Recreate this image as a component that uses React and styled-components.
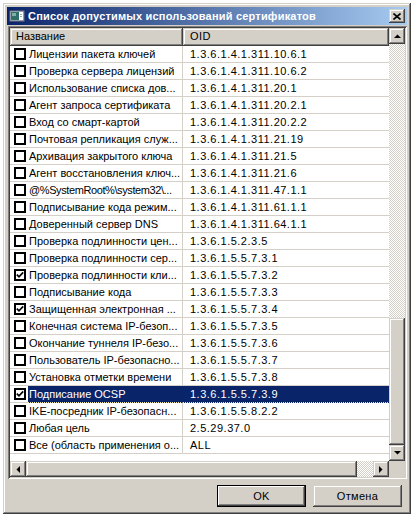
import React from "react";
import styled, { createGlobalStyle } from "styled-components";

const Global = createGlobalStyle`
  html, body { margin: 0; padding: 0; background: #ffffff; }
  body { font-family: "Liberation Sans", Arial, sans-serif; font-size: 11px; }
  #root { padding: 3px 0 0 3px; }
`;

const raised = `
  box-shadow: inset -1px -1px #404040, inset 1px 1px #d4d0c8,
    inset -2px -2px #808080, inset 2px 2px #ffffff;
`;

const Dialog = styled.div`
  box-sizing: border-box;
  width: 408px;
  height: 511px;
  padding: 4px;
  background: #d4d0c8;
  ${raised}
  display: flex;
  flex-direction: column;
`;

const TitleBar = styled.div`
  height: 18px;
  flex: none;
  display: flex;
  align-items: center;
  padding-left: 2px;
  background: linear-gradient(to right, #0a246a, #a6caf0);
`;

const TitleText = styled.span`
  flex: 1;
  margin-left: 3px;
  color: #ffffff;
  font-weight: bold;
  font-size: 11px;
  white-space: nowrap;
  letter-spacing: 0.2px;
`;

const CloseButton = styled.div`
  width: 16px;
  height: 14px;
  margin-right: 2px;
  background: #d4d0c8;
  ${raised}
  display: flex;
  align-items: center;
  justify-content: center;
`;

const ListView = styled.div`
  box-sizing: border-box;
  height: 453px;
  margin: 1px 0 0 1px;
  padding: 2px;
  background: #ffffff;
  box-shadow: inset 1px 1px #808080, inset -1px -1px #ffffff,
    inset 2px 2px #404040, inset -2px -2px #d4d0c8;
  display: grid;
  grid-template-columns: 1fr 16px;
  grid-template-rows: 1fr 16px;
  flex: none;
`;

const Content = styled.div`
  overflow: hidden;
  display: flex;
  flex-direction: column;
  min-width: 0;
`;

const HeaderRow = styled.div`
  display: grid;
  grid-template-columns: 173px 1fr;
  height: 18px;
  flex: none;
`;

const HeaderCell = styled.div`
  background: #d4d0c8;
  ${raised}
  padding-left: ${(p) => p.$pad}px;
  line-height: 17px;
  font-size: 11px;
  color: #000;
  white-space: nowrap;
  letter-spacing: ${(p) => p.$ls || 0}px;
`;

const Row = styled.div`
  display: grid;
  grid-template-columns: 173px 1fr;
  height: 17px;
  flex: none;
`;

const NameCell = styled.div`
  display: flex;
  align-items: stretch;
  border-right: 1px solid ${(p) => (p.$sel ? "#0a246a" : "#d4d0c8")};
  border-bottom: 1px solid #d4d0c8;
  box-sizing: border-box;
  min-width: 0;
`;

const CheckArea = styled.div`
  width: 18px;
  flex: none;
  display: flex;
  align-items: center;
  padding-left: 4px;
  box-sizing: border-box;
  background: #ffffff;
`;

const Box = styled.div`
  width: 12px;
  height: 12px;
  box-sizing: border-box;
  border: 2px solid #000;
  background: #fff;
  display: flex;
  align-items: center;
  justify-content: center;
`;

const selStripe = `
  background-image: repeating-linear-gradient(to right, #f4e9a8 0 1px, transparent 1px 2px);
  background-size: 100% 1px;
  background-repeat: no-repeat;
  background-position: left bottom;
`;

const Label = styled.div`
  flex: 1;
  min-width: 0;
  padding-left: 1px;
  padding-top: 1px;
  line-height: 15px;
  font-size: 11px;
  white-space: nowrap;
  overflow: hidden;
  letter-spacing: ${(p) => (p.$squeeze ? "-0.4px" : "0")};
  color: ${(p) => (p.$sel ? "#ffffff" : "#000000")};
  background-color: ${(p) => (p.$sel ? "#0a246a" : "transparent")};
  ${(p) => (p.$sel ? selStripe + "margin-bottom: -1px;" : "")}
`;

const OidCell = styled.div`
  padding-left: 7px;
  padding-top: 1px;
  line-height: 15px;
  font-size: 11px;
  letter-spacing: 0.5px;
  white-space: nowrap;
  overflow: hidden;
  box-sizing: border-box;
  border-bottom: 1px solid #d4d0c8;
  color: ${(p) => (p.$sel ? "#ffffff" : "#000000")};
  background-color: ${(p) => (p.$sel ? "#0a246a" : "transparent")};
  ${(p) => (p.$sel ? "border-bottom: none;" + selStripe : "")}
`;

const VScroll = styled.div`
  display: flex;
  flex-direction: column;
`;

const HScroll = styled.div`
  display: flex;
  flex-direction: row;
`;

const ScrollBtn = styled.div`
  width: 16px;
  height: 16px;
  flex: none;
  background: #d4d0c8;
  ${raised}
  display: flex;
  align-items: center;
  justify-content: center;
`;

const Track = styled.div`
  flex: ${(p) => (p.$fixed ? "none" : "1")};
  width: ${(p) => (p.$fixed ? `${p.$fixed}px` : "auto")};
  background-color: #ffffff;
  background-image: conic-gradient(#d4d0c8 25%, #ffffff 0 50%, #d4d0c8 0 75%, #ffffff 0);
  background-size: 2px 2px;
`;

const VThumb = styled.div`
  height: 127px;
  flex: none;
  background: #d4d0c8;
  ${raised}
`;

const HThumb = styled.div`
  flex: 1;
  background: #d4d0c8;
  ${raised}
`;

const Corner = styled.div`
  background: #d4d0c8;
`;

const ButtonRow = styled.div`
  display: flex;
  justify-content: flex-end;
  gap: 7px;
  margin-top: 6px;
  padding-right: 5px;
`;

const Button = styled.div`
  width: 89px;
  height: 22px;
  box-sizing: border-box;
  background: #d4d0c8;
  display: flex;
  align-items: center;
  justify-content: center;
  font-size: 11px;
  letter-spacing: 0.3px;
  color: #000;
  ${(p) =>
    p.$default
      ? `box-shadow: inset 0 0 0 1px #000000, inset -2px -2px #404040, inset 2px 2px #ffffff, inset -3px -3px #808080;`
      : raised}
`;

const Arrow = ({ dir }) => {
  const pts = {
    up: "0,4 7,4 3.5,0.5",
    down: "0,0 7,0 3.5,3.5",
    left: "4,0 4,7 0.5,3.5",
    right: "0,0 0,7 3.5,3.5",
  }[dir];
  const vert = dir === "up" || dir === "down";
  return (
    <svg width={vert ? 7 : 4} height={vert ? 4 : 7} viewBox={vert ? "0 0 7 4" : "0 0 4 7"}>
      <polygon points={pts} fill="#000" />
    </svg>
  );
};

const TitleIcon = () => (
  <svg width="16" height="16" viewBox="0 0 16 16">
    <rect x="1" y="3" width="14" height="10" fill="#c0c0c0" stroke="#6d7b8a" />
    <rect x="2" y="4" width="8" height="8" fill="#2f6f6a" />
    <rect x="3" y="5" width="4" height="3" fill="#7fb0a8" />
    <rect x="10" y="4" width="4" height="8" fill="#ffffff" />
    <rect x="11" y="6" width="2" height="1" fill="#9aa" />
    <rect x="11" y="8" width="2" height="1" fill="#9aa" />
  </svg>
);

const CloseX = () => (
  <svg width="8" height="7" viewBox="0 0 8 7">
    <path d="M0.5 0.5 L7.5 6.5 M7.5 0.5 L0.5 6.5" stroke="#000" strokeWidth="1.6" />
  </svg>
);

const Check = () => (
  <svg width="8" height="8" viewBox="0 0 8 8">
    <polyline points="0.8,3.6 3,5.8 7.2,1.4" fill="none" stroke="#000" strokeWidth="1.7" />
  </svg>
);

const rows = [
  ["Лицензии пакета ключей", "1.3.6.1.4.1.311.10.6.1"],
  ["Проверка сервера лицензий", "1.3.6.1.4.1.311.10.6.2"],
  ["Использование списка дов...", "1.3.6.1.4.1.311.20.1"],
  ["Агент запроса сертификата", "1.3.6.1.4.1.311.20.2.1"],
  ["Вход со смарт-картой", "1.3.6.1.4.1.311.20.2.2"],
  ["Почтовая репликация служ...", "1.3.6.1.4.1.311.21.19"],
  ["Архивация закрытого ключа", "1.3.6.1.4.1.311.21.5"],
  ["Агент восстановления ключ...", "1.3.6.1.4.1.311.21.6"],
  ["@%SystemRoot%\\system32\\...", "1.3.6.1.4.1.311.47.1.1", false, false, true],
  ["Подписывание кода режим...", "1.3.6.1.4.1.311.61.1.1"],
  ["Доверенный сервер DNS", "1.3.6.1.4.1.311.64.1.1"],
  ["Проверка подлинности цен...", "1.3.6.1.5.2.3.5"],
  ["Проверка подлинности сер...", "1.3.6.1.5.5.7.3.1"],
  ["Проверка подлинности кли...", "1.3.6.1.5.5.7.3.2", true],
  ["Подписывание кода", "1.3.6.1.5.5.7.3.3"],
  ["Защищенная электронная ...", "1.3.6.1.5.5.7.3.4", true],
  ["Конечная система IP-безоп...", "1.3.6.1.5.5.7.3.5"],
  ["Окончание туннеля IP-безо...", "1.3.6.1.5.5.7.3.6"],
  ["Пользователь IP-безопасно...", "1.3.6.1.5.5.7.3.7"],
  ["Установка отметки времени", "1.3.6.1.5.5.7.3.8"],
  ["Подписание OCSP", "1.3.6.1.5.5.7.3.9", true, true],
  ["IKE-посредник IP-безопасн...", "1.3.6.1.5.5.8.2.2"],
  ["Любая цель", "2.5.29.37.0"],
  ["Все (область применения о...", "ALL"],
];

export default function App() {
  return (
    <>
      <Global />
      <Dialog>
        <TitleBar>
          <TitleIcon />
          <TitleText>Список допустимых использований сертификатов</TitleText>
          <CloseButton>
            <CloseX />
          </CloseButton>
        </TitleBar>
        <ListView>
          <Content>
            <HeaderRow>
              <HeaderCell $pad={6}>Название</HeaderCell>
              <HeaderCell $pad={7} $ls={0.5}>OID</HeaderCell>
            </HeaderRow>
            {rows.map(([name, oid, checked, sel, squeeze]) => (
              <Row key={oid}>
                <NameCell $sel={sel}>
                  <CheckArea>
                    <Box>{checked && <Check />}</Box>
                  </CheckArea>
                  <Label $sel={sel} $squeeze={squeeze}>{name}</Label>
                </NameCell>
                <OidCell $sel={sel}>{oid}</OidCell>
              </Row>
            ))}
          </Content>
          <VScroll>
            <ScrollBtn>
              <Arrow dir="up" />
            </ScrollBtn>
            <Track />
            <VThumb />
            <ScrollBtn>
              <Arrow dir="down" />
            </ScrollBtn>
          </VScroll>
          <HScroll>
            <ScrollBtn>
              <Arrow dir="left" />
            </ScrollBtn>
            <HThumb />
            <Track $fixed={16} />
            <ScrollBtn>
              <Arrow dir="right" />
            </ScrollBtn>
          </HScroll>
          <Corner />
        </ListView>
        <ButtonRow>
          <Button $default>OK</Button>
          <Button>Отмена</Button>
        </ButtonRow>
      </Dialog>
    </>
  );
}
